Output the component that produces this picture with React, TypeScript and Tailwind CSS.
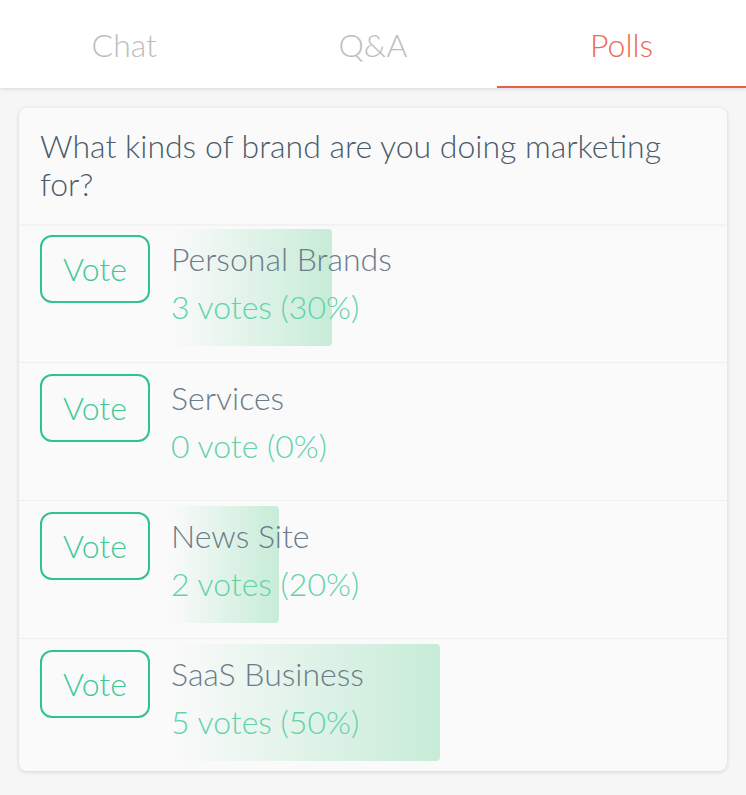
import React from "react";

const options = [
  { label: "Personal Brands", votes: "3 votes (30%)", pct: 30 },
  { label: "Services", votes: "0 vote (0%)", pct: 0 },
  { label: "News Site", votes: "2 votes (20%)", pct: 20 },
  { label: "SaaS Business", votes: "5 votes (50%)", pct: 50 },
];

const tabs = ["Chat", "Q&A", "Polls"];

export default function App() {
  return (
    <div
      className="min-h-[795px] w-[746px] bg-[#f6f6f6] font-light"
      style={{ fontFamily: "Lato, 'Open Sans', sans-serif" }}
    >
      <div className="grid grid-cols-3 bg-white shadow-[0_1px_4px_rgba(0,0,0,0.12)] relative z-10">
        {tabs.map((t) => {
          const active = t === "Polls";
          return (
            <div
              key={t}
              className={
                "h-[88px] flex items-center justify-center text-[32px] pt-[4px] border-b-2 " +
                (active ? "border-[#e8604a] text-[#ec6a55]" : "border-transparent text-[#bdbdbd]")
              }
            >
              {t}
            </div>
          );
        })}
      </div>

      <div className="mx-[19px] mt-[20px] rounded-lg bg-[#fafafa] shadow-[0_1px_4px_rgba(0,0,0,0.14)] overflow-hidden">
        <div className="px-[21px] pt-[19px] pb-[21px] text-[32px] leading-[38px] text-[#4a5b6b] shadow-[0_1px_3px_rgba(0,0,0,0.06)]">
          What kinds of brand are you doing marketing for?
        </div>

        <div>
          {options.map((o, i) => (
            <div
              key={o.label}
              className={
                "flex gap-[22px] pl-[21px] pr-[21px] pt-[11px] " +
                (i === options.length - 1 ? "h-[133px] " : "h-[138px] ") +
                (i > 0 ? "border-t border-[#efefef]" : "")
              }
            >
              <button className="w-[110px] h-[68px] shrink-0 rounded-xl border-2 border-[#2fc38e] text-[#3dca97] text-[32px] font-light">
                Vote
              </button>
              <div className="relative flex-1 -ml-[1px]">
                {o.pct > 0 && (
                  <div
                    className="absolute left-0 top-[-6px] h-[117px] rounded-[4px] bg-gradient-to-r from-[#c7ecd8]/0 to-[#c7ecd8]"
                    style={{ width: `${o.pct * 5.38}px` }}
                  />
                )}
                <div className="relative text-[32px] leading-[48px] text-[#6c7c89]">{o.label}</div>
                <div className="relative text-[32px] leading-[48px] text-[#63d2a9]">{o.votes}</div>
              </div>
            </div>
          ))}
        </div>
      </div>
    </div>
  );
}
